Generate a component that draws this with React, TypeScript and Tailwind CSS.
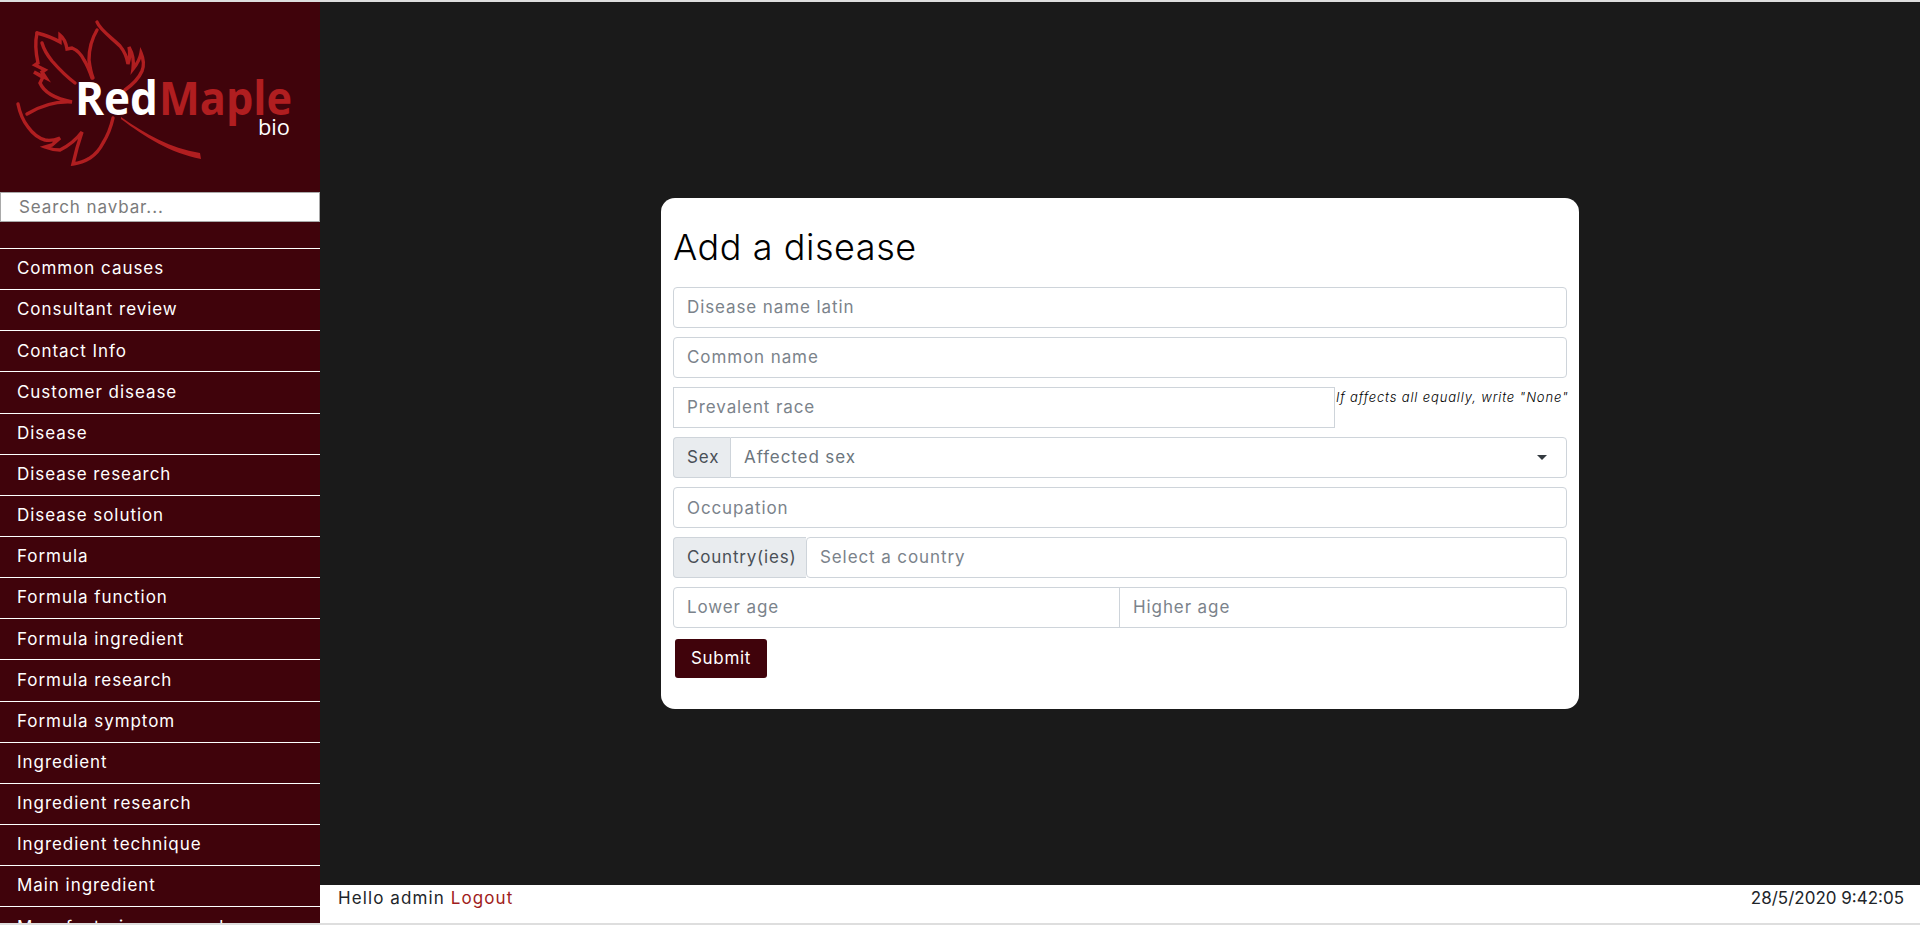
const navItems = [
  'Common causes',
  'Consultant review',
  'Contact Info',
  'Customer disease',
  'Disease',
  'Disease research',
  'Disease solution',
  'Formula',
  'Formula function',
  'Formula ingredient',
  'Formula research',
  'Formula symptom',
  'Ingredient',
  'Ingredient research',
  'Ingredient technique',
  'Main ingredient',
  'Manufacturing research',
];

const inputClass =
  'h-[41px] w-full rounded border border-[#ced4da] bg-white px-[13px] text-[17px] tracking-[0.9px] text-[#495057] outline-none placeholder:text-[#7b838b]';

const Logo = () => (
  <svg viewBox="0 2 320 190" className="h-[190px] w-[320px] shrink-0" fill="none">
    <g stroke="#b01e20" strokeWidth="3.4" strokeLinejoin="miter" strokeLinecap="round">
      <path d="M97 22 C100 30 112 38 120 46 C125 52 127 58 128 64 C130 58 130 52 129 47 C133 54 134 62 133 69 C137 64 140 59 141 53 C144 60 144 66 142 71 C139 78 132 85 125 90" />
      <path d="M97 30 C91 40 89 50 89 60 C90 68 91 73 93 78" />
      <path d="M37 33 C45 35 53 38 60 42 L60 35 C64 38 66 43 67 49 L72 48 C77 50 81 54 84 60 C88 66 90 72 92 78" />
      <path d="M42 43 C44 50 48 56 52 61 C59 69 67 77 75 83" />
      <path d="M37 33 C35 42 36 54 38 63 L35 65 L45 70 L42 72 L46 78 L34 72 C37 74 40 76 43 77 L40 83 C43 90 52 98 72 102 C55 101 40 106 27 114" />
      <path d="M18 104 C20 114 24 122 28 127 C33 134 38 138 45 140 C50 141 55 140 60 138 L52 145 L45 147 C50 149 55 150 60 150 C68 146 76 140 82 132 L77 148 L73 164 C80 163 85 161 90 158 C96 154 100 149 103 143 C108 135 111 127 113 118" />
    </g>
    <path d="M121 117 C145 134 170 148 200 153 L201 159 C170 153 145 137 121 119 Z" fill="#b01e20" />
    <text y="115" fontFamily="'Open Sans', sans-serif" fontWeight="700" fontSize="46">
      <tspan x="75" textLength="83" lengthAdjust="spacingAndGlyphs" fill="#ffffff">Red</tspan>
      <tspan x="159" textLength="133" lengthAdjust="spacingAndGlyphs" fill="#b01e20">Maple</tspan>
    </text>
    <text x="258" y="135" textLength="32" lengthAdjust="spacingAndGlyphs" fontFamily="'Open Sans', sans-serif" fontWeight="400" fontSize="22" fill="#ffffff">
      bio
    </text>
  </svg>
);

const Sidebar = () => (
  <aside className="flex h-full w-[320px] shrink-0 flex-col overflow-hidden bg-[#40030b]">
    <Logo />
    <input
      placeholder="Search navbar..."
      className="h-[30px] w-full shrink-0 border border-[#a9a9a9] bg-white pl-[18px] text-[17px] tracking-[0.9px] text-[#495057] outline-none placeholder:text-[#7b7b7b]"
    />
    <nav className="mt-[26px] shrink-0 border-t border-white">
      {navItems.map((item) => (
        <a key={item} href="#" className="flex h-[41.15px] items-center border-b border-white pl-[17px] text-[17px] tracking-[0.95px] whitespace-nowrap text-white">
          {item}
        </a>
      ))}
    </nav>
  </aside>
);

const AddDiseaseForm = () => (
  <div className="w-[918px] rounded-[14px] bg-white px-3 pt-[27px] pb-[31px]">
    <h1 className="mb-[18px] text-[36px] leading-[44px] font-light tracking-[0.55px] text-black">Add a disease</h1>
    <form className="flex flex-col gap-[9.05px]">
      <input placeholder="Disease name latin" className={inputClass} />
      <input placeholder="Common name" className={inputClass} />
      <div className="flex items-start">
        <input placeholder="Prevalent race" className="h-[41px] w-[662px] shrink-0 border border-[#ced4da] bg-white px-[13px] text-[17px] tracking-[0.9px] outline-none placeholder:text-[#7b838b]" />
        <span className="pl-[1px] text-[13px] leading-[20px] font-light tracking-[0.85px] whitespace-nowrap text-black italic">If affects all equally, write "None"</span>
      </div>
      <div className="flex h-[41px]">
        <span className="flex w-[57px] items-center rounded-l border border-r-0 border-[#ced4da] bg-[#e9ecef] pl-[13px] text-[17px] tracking-[0.9px] text-[#495057]">Sex</span>
        <div className="flex flex-1 items-center justify-between rounded-r border border-[#ced4da] px-[13px] text-[17px] tracking-[0.9px] text-[#6c757d]">
          <span>Affected sex</span>
          <span className="mr-[6px] h-0 w-0 border-x-[5px] border-t-[5px] border-x-transparent border-t-[#343a40]" />
        </div>
      </div>
      <input placeholder="Occupation" className={inputClass} />
      <div className="flex h-[41px]">
        <span className="flex w-[133px] items-center rounded-l border border-r-0 border-[#ced4da] bg-[#e9ecef] pl-[13px] whitespace-nowrap text-[17px] tracking-[0.8px] text-[#495057]">Country(ies)</span>
        <input placeholder="Select a country" className="min-w-0 flex-1 rounded border border-[#ced4da] px-[13px] text-[17px] tracking-[0.9px] outline-none placeholder:text-[#7b838b]" />
      </div>
      <div className="flex h-[41px] rounded border border-[#ced4da]">
        <input placeholder="Lower age" className="w-[446px] border-r border-[#ced4da] px-[13px] text-[17px] tracking-[0.9px] outline-none placeholder:text-[#7b838b]" />
        <input placeholder="Higher age" className="min-w-0 flex-1 px-[13px] text-[17px] tracking-[0.9px] outline-none placeholder:text-[#7b838b]" />
      </div>
      <button type="button" className="mt-[2px] ml-[2px] h-[39px] w-[92px] rounded-[3px] bg-[#40030b] text-[17px] tracking-[0.7px] text-white">
        Submit
      </button>
    </form>
  </div>
);

export default function App() {
  return (
    <div className="flex h-[925px] flex-col overflow-hidden border-y-2 border-[#dedede] bg-white font-['Inter',sans-serif]">
      <div className="flex min-h-0 flex-1">
        <Sidebar />
        <div className="flex min-w-0 flex-1 flex-col">
          <main className="flex flex-1 items-center justify-center bg-[#1a1a1a] pt-[20px]">
            <AddDiseaseForm />
          </main>
          <footer className="flex h-[38px] shrink-0 justify-between bg-white px-[18px] pt-[1px] text-[17px] leading-[24px] tracking-[1.1px] text-[#212529]">
            <span>
              Hello admin <a href="#" className="text-[#a01c20]">Logout</a>
            </span>
            <span className="mr-[-2px] tracking-[0px] text-[#212529]">28/5/2020 9:42:05</span>
          </footer>
        </div>
      </div>
    </div>
  );
}
